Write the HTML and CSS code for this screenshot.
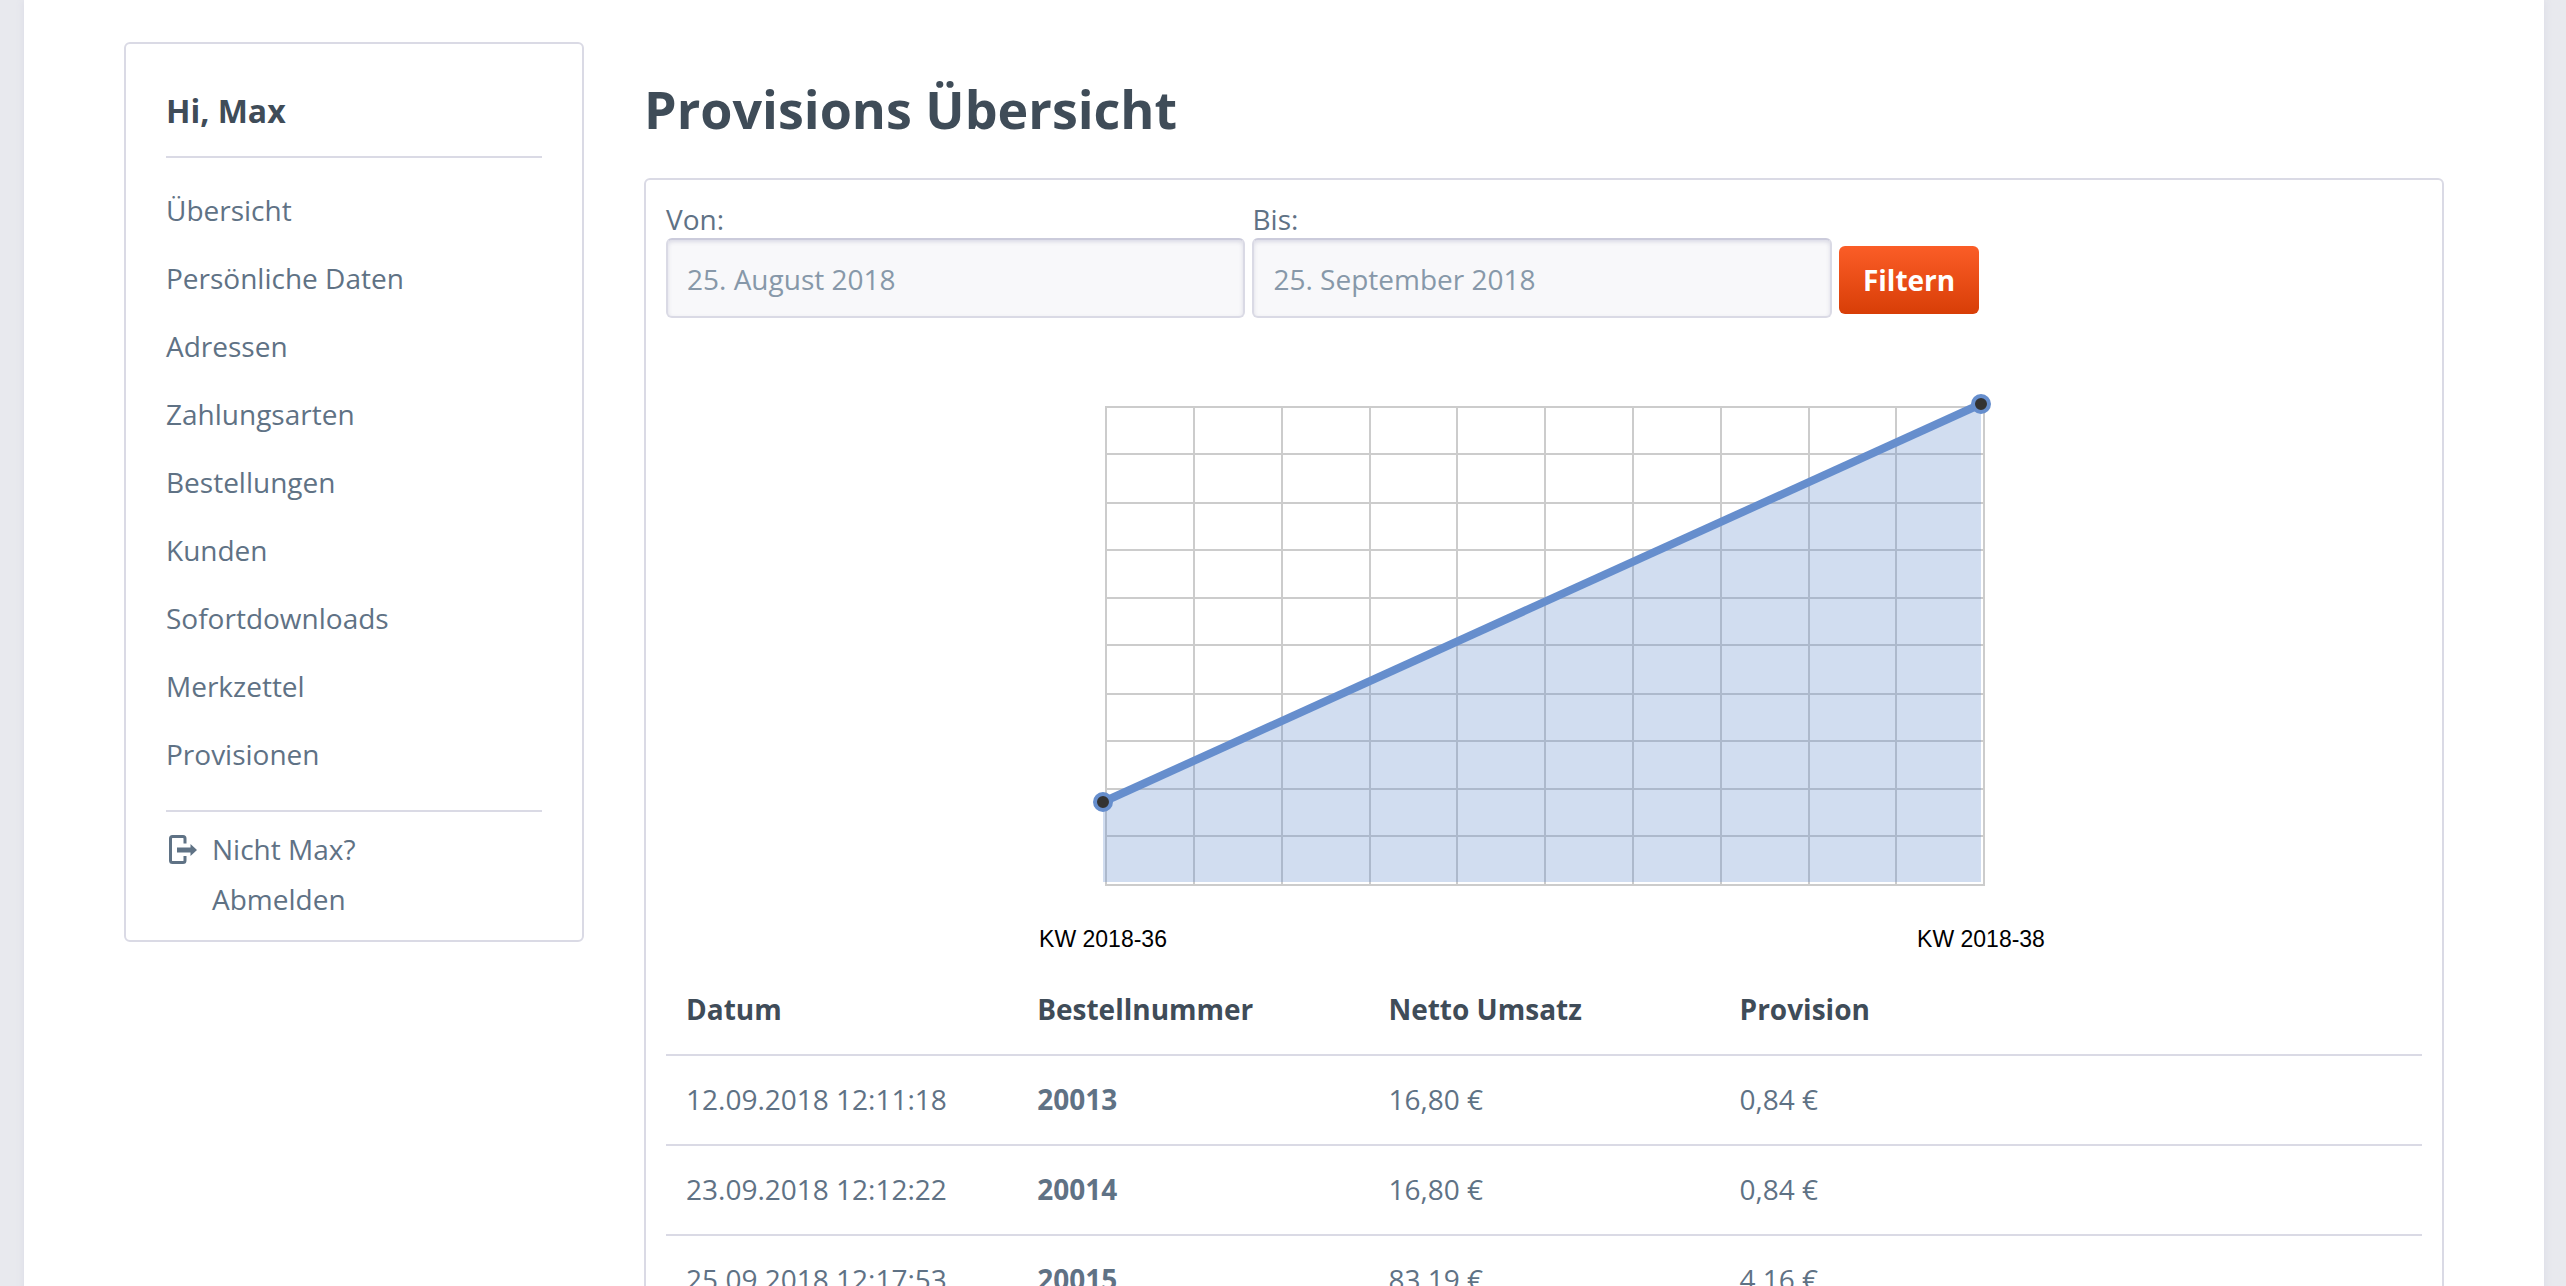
FILE: index.html
```html
<!DOCTYPE html>
<html lang="de">
<head>
<meta charset="utf-8">
<meta name="viewport" content="width=device-width, initial-scale=1">
<title>Provisions Übersicht</title>
<link rel="stylesheet" href="styles.css">
</head>
<body>
<div class="page">
  <aside class="account panel">
    <h2 class="account-greeting">Hi, Max</h2>
    <nav class="account-nav" aria-label="Konto">
      <a href="#">Übersicht</a>
      <a href="#">Persönliche Daten</a>
      <a href="#">Adressen</a>
      <a href="#">Zahlungsarten</a>
      <a href="#">Bestellungen</a>
      <a href="#">Kunden</a>
      <a href="#">Sofortdownloads</a>
      <a href="#">Merkzettel</a>
      <a href="#">Provisionen</a>
    </nav>
    <a class="logout" href="#">
      <svg class="logout-icon" viewBox="0 0 30 30" aria-hidden="true">
        <path d="M17 9.500V4.500Q17 2.500 15 2.500H4.500Q2.500 2.500 2.500 4.500V26.500Q2.500 28.500 4.500 28.500H15Q17 28.500 17 26.500V22" fill="none" stroke="currentColor" stroke-width="3"/>
        <path d="M9 13.500H22.500V10L29 16L22.500 22V18.500H9Z" fill="currentColor"/>
      </svg>
      <span>Nicht Max?<br>Abmelden</span>
    </a>
  </aside>
  <main class="content">
    <h1 class="title">Provisions Übersicht</h1>
    <section class="report panel">
      <form class="filter">
        <div class="field">
          <label for="from">Von:</label>
          <input id="from" type="text" value="25. August 2018">
        </div>
        <div class="field">
          <label for="to">Bis:</label>
          <input id="to" type="text" value="25. September 2018">
        </div>
        <button class="filter-button" type="button">Filtern</button>
      </form>
      <svg class="chart" viewBox="0 0 878 560" role="img" aria-label="Provisionen je Kalenderwoche">
        <path class="chart-grid" d="M0 2H880M0 49H880M0 98H880M0 145H880M0 193H880M0 240H880M0 289H880M0 336H880M0 384H880M0 431H880M0 480H880M1 2V480M89 2V480M177 2V480M265 2V480M352 2V480M440 2V480M528 2V480M616 2V480M704 2V480M791 2V480M879 2V480"/>
        <path class="chart-area" d="M-2 477V397L876 -1V477Z"/>
        <path class="chart-line" d="M-2 397L876 -1"/>
        <circle class="chart-point" cx="-2" cy="397" r="8"/>
        <circle class="chart-point" cx="876" cy="-1" r="8"/>
        <text class="chart-label" x="-2" y="542">KW 2018-36</text>
        <text class="chart-label" x="876" y="542">KW 2018-38</text>
      </svg>
      <table class="orders">
        <thead>
          <tr><th>Datum</th><th>Bestellnummer</th><th>Netto Umsatz</th><th>Provision</th><td></td></tr>
        </thead>
        <tbody>
          <tr><td>12.09.2018 12:11:18</td><td><strong>20013</strong></td><td>16,80 €</td><td>0,84 €</td><td></td></tr>
          <tr><td>23.09.2018 12:12:22</td><td><strong>20014</strong></td><td>16,80 €</td><td>0,84 €</td><td></td></tr>
          <tr><td>25.09.2018 12:17:53</td><td><strong>20015</strong></td><td>83,19 €</td><td>4,16 €</td><td></td></tr>
        </tbody>
      </table>
    </section>
  </main>
</div>
</body>
</html>
```
FILE: styles.css
```css
* { box-sizing: border-box; }

html { height: 100%; }

body {
  height: 100%;
  margin: 0;
  padding: 0 22px 0 24px;
  overflow: hidden;
  background: #e8e9ee;
  color: #5f7285;
  font: 28px/38px "Open Sans", "Noto Sans", sans-serif;
}

a { color: inherit; text-decoration: none; }

.page {
  display: grid;
  grid-template-columns: 460px minmax(0, 1fr);
  gap: 60px;
  align-items: start;
  min-height: 100%;
  padding: 42px 100px;
  background: #fff;
  box-shadow: 0 0 8px #dadae5;
}

.panel {
  border: 2px solid #dadae5;
  border-radius: 6px;
}

.account { padding: 42px 40px 16px; }

.account-greeting {
  margin: 0;
  padding-bottom: 20px;
  border-bottom: 2px solid #dadae5;
  color: #3f4c58;
  font-size: 32px;
  line-height: 50px;
}

.account-nav {
  display: flex;
  flex-direction: column;
  padding: 18px 0 22px;
  border-bottom: 2px solid #dadae5;
  line-height: 68px;
}

.logout {
  display: flex;
  gap: 14px;
  padding-top: 12px;
  line-height: 50px;
}

.logout-icon {
  width: 30px;
  height: 30px;
  margin: 10px 0 0 2px;
}

.title {
  margin: 36px 0 38px;
  color: #3f4c58;
  font-size: 52px;
  line-height: 62px;
}

.report { padding: 20px; }

.filter {
  display: flex;
  align-items: flex-end;
  gap: 7px;
}

.field {
  display: flex;
  flex-direction: column;
  width: 33%;
}

.field input {
  width: 100%;
  height: 80px;
  padding: 2px 19px 0;
  border: 2px solid #dadae5;
  border-top-color: #cbcbdb;
  border-radius: 6px;
  background: #f8f8fa;
  box-shadow: inset 0 2px 4px #dadae5;
  color: #8798a9;
  font: inherit;
}

.filter-button {
  height: 68px;
  margin: 0 0 4px;
  padding: 0 24px;
  border: 0;
  border-radius: 6px;
  background: linear-gradient(#fb5d27, #d83e07);
  color: #fff;
  font: inherit;
  font-weight: 700;
}

.chart {
  display: block;
  width: 50%;
  margin: 87px auto 0;
  overflow: visible;
}

.chart-grid { fill: none; stroke: #ccc; stroke-width: 2; }
.chart-area { fill: #668ecd; fill-opacity: 0.3; }
.chart-line { stroke: #668ecd; stroke-width: 8; }
.chart-point { fill: #333; stroke: #668ecd; stroke-width: 4; }

.chart-label {
  font: 23px "Liberation Sans", Arial, sans-serif;
  fill: #000;
  text-anchor: middle;
}

.orders {
  width: 100%;
  table-layout: fixed;
  border-collapse: collapse;
}

.orders th,
.orders td {
  height: 90px;
  padding: 0 20px 2px;
  border-bottom: 2px solid #dadae5;
  text-align: left;
}

.orders th { color: #3f4c58; }
```
